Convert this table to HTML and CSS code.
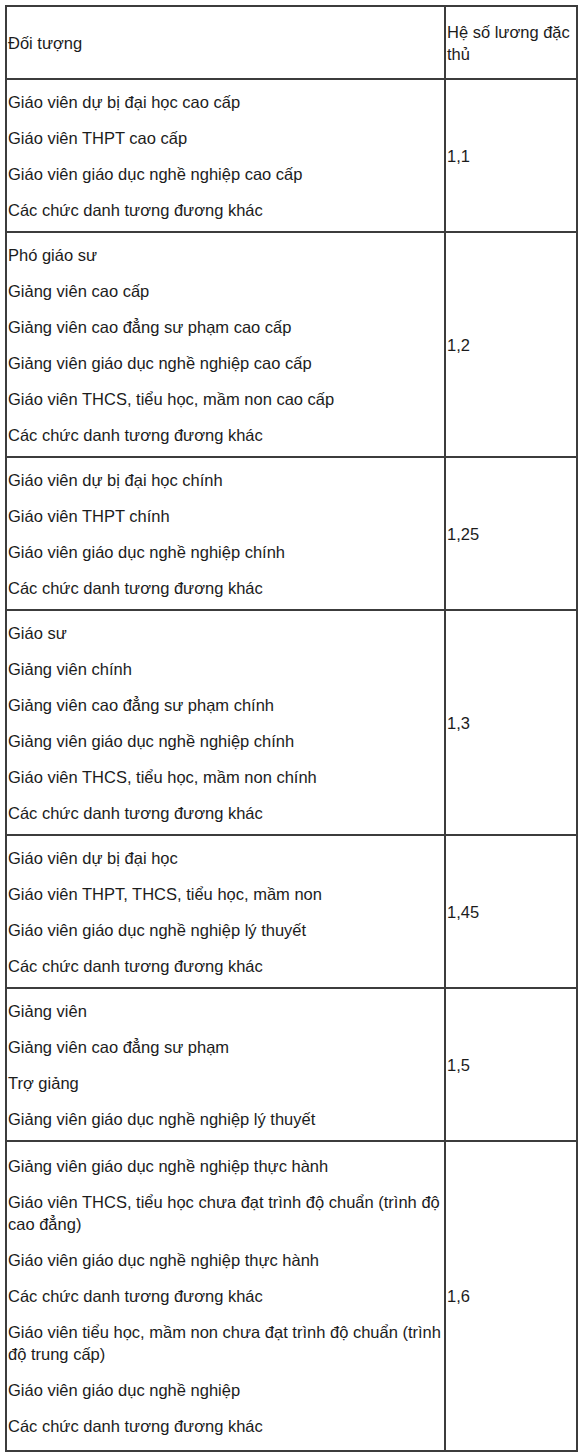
FILE: index.html
```html
<!DOCTYPE html>
<html lang="vi">
<head>
<meta charset="utf-8">
<link rel="stylesheet" href="styles.css">
</head>
<body>
<table class="tbl">
  <colgroup><col class="col-a"><col class="col-b"></colgroup>
  <tr class="head">
    <td><p>Đối tượng</p></td>
    <td><p>Hệ số lương đặc thủ</p></td>
  </tr>
  <tr>
    <td>
      <p>Giáo viên dự bị đại học cao cấp</p>
      <p>Giáo viên THPT cao cấp</p>
      <p>Giáo viên giáo dục nghề nghiệp cao cấp</p>
      <p>Các chức danh tương đương khác</p>
    </td>
    <td><p>1,1</p></td>
  </tr>
  <tr>
    <td>
      <p>Phó giáo sư</p>
      <p>Giảng viên cao cấp</p>
      <p>Giảng viên cao đẳng sư phạm cao cấp</p>
      <p>Giảng viên giáo dục nghề nghiệp cao cấp</p>
      <p>Giáo viên THCS, tiểu học, mầm non cao cấp</p>
      <p>Các chức danh tương đương khác</p>
    </td>
    <td><p>1,2</p></td>
  </tr>
  <tr>
    <td>
      <p>Giáo viên dự bị đại học chính</p>
      <p>Giáo viên THPT chính</p>
      <p>Giáo viên giáo dục nghề nghiệp chính</p>
      <p>Các chức danh tương đương khác</p>
    </td>
    <td><p>1,25</p></td>
  </tr>
  <tr>
    <td>
      <p>Giáo sư</p>
      <p>Giảng viên chính</p>
      <p>Giảng viên cao đẳng sư phạm chính</p>
      <p>Giảng viên giáo dục nghề nghiệp chính</p>
      <p>Giáo viên THCS, tiểu học, mầm non chính</p>
      <p>Các chức danh tương đương khác</p>
    </td>
    <td><p>1,3</p></td>
  </tr>
  <tr>
    <td>
      <p>Giáo viên dự bị đại học</p>
      <p>Giáo viên THPT, THCS, tiểu học, mầm non</p>
      <p>Giáo viên giáo dục nghề nghiệp lý thuyết</p>
      <p>Các chức danh tương đương khác</p>
    </td>
    <td><p>1,45</p></td>
  </tr>
  <tr>
    <td>
      <p>Giảng viên</p>
      <p>Giảng viên cao đẳng sư phạm</p>
      <p>Trợ giảng</p>
      <p>Giảng viên giáo dục nghề nghiệp lý thuyết</p>
    </td>
    <td><p>1,5</p></td>
  </tr>
  <tr class="last">
    <td>
      <p>Giảng viên giáo dục nghề nghiệp thực hành</p>
      <p>Giáo viên THCS, tiểu học chưa đạt trình độ chuẩn (trình độ cao đẳng)</p>
      <p>Giáo viên giáo dục nghề nghiệp thực hành</p>
      <p>Các chức danh tương đương khác</p>
      <p>Giáo viên tiểu học, mầm non chưa đạt trình độ chuẩn (trình độ trung cấp)</p>
      <p>Giáo viên giáo dục nghề nghiệp</p>
      <p>Các chức danh tương đương khác</p>
    </td>
    <td><p>1,6</p></td>
  </tr>
</table>
</body>
</html>
```

FILE: styles.css
```css
html, body {
  margin: 0;
  padding: 0;
  background: #ffffff;
}

body {
  padding: 5px;
  font-family: "Liberation Sans", Arial, sans-serif;
  font-size: 16.5px;
  line-height: 22px;
  color: #1c1c1c;
}

.tbl {
  border-collapse: collapse;
  table-layout: fixed;
  width: 571px;
}

.col-a { width: 439px; }
.col-b { width: 132px; }

.tbl td {
  border: 2px solid #3c3c3c;
  padding: 10.5px 0 10.5px 1px;
  vertical-align: middle;
}

.tbl .head td {
  padding-top: 13.5px;
  padding-bottom: 13.5px;
}

.tbl .last td {
  padding-top: 13px;
  padding-bottom: 13px;
}

.tbl p {
  margin: 0;
}

.tbl p + p {
  margin-top: 14px;
}
```
